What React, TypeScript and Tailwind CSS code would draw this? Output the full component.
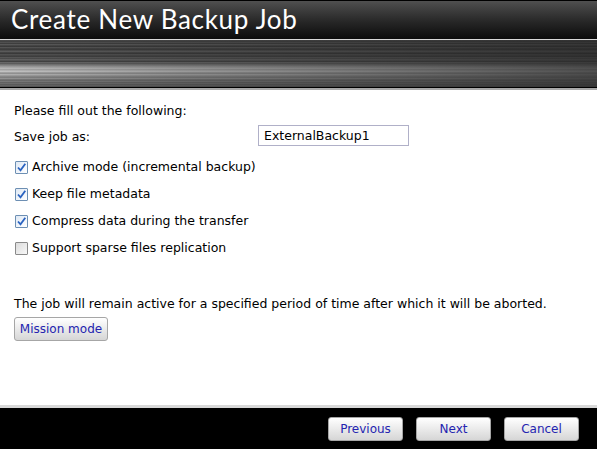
import React from 'react'

// left / right brightness of each streak row in the header band
const streakRows: [number, number][] = [
  [74, 50], [66, 46], [80, 52], [62, 44], [88, 54], [70, 48], [58, 42], [84, 52],
  [66, 46], [60, 44], [76, 50], [90, 54], [68, 48], [58, 42], [80, 50], [70, 48],
  [62, 44], [86, 54], [74, 50], [96, 56], [82, 52], [66, 46], [104, 58], [92, 54],
  [116, 60], [134, 64], [154, 70], [170, 74], [184, 78], [164, 72], [180, 76], [194, 80],
  [162, 72], [146, 68], [176, 74], [156, 70], [136, 66], [126, 64], [146, 68], [118, 62],
  [106, 58], [120, 62], [98, 56], [108, 58], [92, 54], [100, 56], [86, 52],
]

const gray = (v: number) => `rgb(${v},${v},${v})`

const StreakBand: React.FC = () => (
  <svg width="597" height="47" viewBox="0 0 597 47" preserveAspectRatio="none" className="block">
    <defs>
      {streakRows.map(([l, r], i) => (
        <linearGradient key={i} id={`sg${i}`} x1="0" x2="1" y1="0" y2="0">
          <stop offset="0" stopColor={gray(l)} />
          <stop offset="0.3" stopColor={gray(Math.round(l * 0.65 + r * 0.35))} />
          <stop offset="1" stopColor={gray(r)} />
        </linearGradient>
      ))}
    </defs>
    {streakRows.map((_, i) => (
      <rect key={i} x="0" y={i} width="597" height="1" fill={`url(#sg${i})`} />
    ))}
  </svg>
)

const CheckBox: React.FC<{ checked?: boolean }> = ({ checked }) =>
  checked ? (
    <span className="w-[13px] h-[13px] shrink-0 border border-[#6d8fb3] bg-gradient-to-br from-[#dfe9f5] to-white rounded-[1px] flex items-center justify-center">
      <svg width="11" height="11" viewBox="0 0 11 11">
        <path d="M2 5.5 L4.5 8.3 L9.3 1.8" fill="none" stroke="#2a63c1" strokeWidth="1.8" />
      </svg>
    </span>
  ) : (
    <span className="w-[13px] h-[13px] shrink-0 border border-[#8a8a8a] bg-gradient-to-br from-[#dcdcdc] to-[#f8f8f8] rounded-[1px]" />
  )

const Btn: React.FC<{ children: React.ReactNode; className?: string }> = ({ children, className }) => (
  <button
    className={`h-[24px] rounded-[3px] border border-[#a6a6a6] bg-gradient-to-b from-white to-[#d6d6d6] text-[#2424b0] text-[12px] leading-none ${className ?? ''}`}
  >
    {children}
  </button>
)

const options = [
  { label: 'Archive mode (incremental backup)', checked: true },
  { label: 'Keep file metadata', checked: true },
  { label: 'Compress data during the transfer', checked: true },
  { label: 'Support sparse files replication', checked: false },
]

export default function App() {
  return (
    <div className="w-[597px] h-[449px] flex flex-col bg-white overflow-hidden font-['DejaVu_Sans',sans-serif] text-[12.5px] text-black">
      {/* Header */}
      <div className="h-[39px] border-t border-black bg-gradient-to-b from-[#505050] via-[#2a2a2a] to-[#0c0c0c] flex items-center pl-[11px]">
        <h1 className="text-white text-[26px] leading-none font-['Lato',sans-serif] tracking-[0.7px] pb-[2px]">
          Create New Backup Job
        </h1>
      </div>
      <div className="h-px bg-[#d8d8d8]" />
      <StreakBand />
      <div className="h-px bg-black" />
      <div className="h-[2px] bg-[#a8a8a8]" />

      {/* Content */}
      <div className="flex-1 px-[14px] pt-[12px]">
        <p className="leading-[18px]">Please fill out the following:</p>
        <div className="mt-[5px] flex items-center h-[21px]">
          <span className="w-[244px] pt-[3px]">Save job as:</span>
          <input
            defaultValue="ExternalBackup1"
            className="w-[151px] h-[21px] border border-[#b0b0c8] px-[5px] text-[12.5px] outline-none"
          />
        </div>
        <div className="mt-[8px]">
          {options.map((o) => (
            <label key={o.label} className="h-[27px] flex items-center gap-[4px] pl-px">
              <CheckBox checked={o.checked} />
              <span>{o.label}</span>
            </label>
          ))}
        </div>
        <p className="mt-[33px] leading-[18px]">
          The job will remain active for a specified period of time after which it will be aborted.
        </p>
        <Btn className="mt-[4px] w-[94px] h-[23px]">Mission mode</Btn>
      </div>

      {/* Footer */}
      <div className="h-[3px] bg-[#d9d9d9]" />
      <div className="h-[41px] bg-black flex items-start justify-end gap-[13px] pr-[18px] pt-[9px]">
        <Btn className="w-[75px]">Previous</Btn>
        <Btn className="w-[75px]">Next</Btn>
        <Btn className="w-[75px]">Cancel</Btn>
      </div>
    </div>
  )
}
